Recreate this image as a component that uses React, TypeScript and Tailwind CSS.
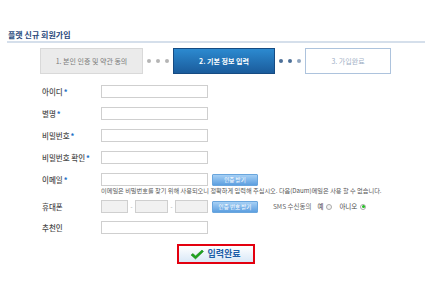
import React from "react";

const font = { fontFamily: '"Noto Sans CJK KR", "Noto Sans", sans-serif' };

function Star() {
  return <span className="text-[#1a6fc4] font-bold ml-[1px]">*</span>;
}

function Label({ children, star }: { children: React.ReactNode; star?: boolean }) {
  return (
    <div className="w-[59px] shrink-0 text-[7.5px] leading-[13px] text-[#4a4a4a] font-medium whitespace-nowrap">
      {children}
      {star && <Star />}
    </div>
  );
}

function Input({ w = 107, gray = false }: { w?: number; gray?: boolean }) {
  return (
    <div
      className={`h-[13px] shrink-0 border border-[#cfcfcf] ${gray ? "bg-[#f1f1f1]" : "bg-white"}`}
      style={{ width: w }}
    />
  );
}

function BlueBtn({ children }: { children: React.ReactNode }) {
  return (
    <div className="ml-[4px] w-[46px] h-[12px] rounded-[1px] border border-[#6aa6dd] bg-gradient-to-b from-[#a6d0f5] to-[#5c9fe0] text-white text-[5.5px] leading-[10px] text-center whitespace-nowrap">
      {children}
    </div>
  );
}

function Dots({ colors }: { colors: string[] }) {
  return (
    <div className="w-[30px] flex items-center justify-center gap-[5px]">
      {colors.map((c, i) => (
        <div key={i} className="w-[4px] h-[4px] rounded-full" style={{ background: c }} />
      ))}
    </div>
  );
}

export default function App() {
  return (
    <div className="w-[433px] h-[289px] bg-white pt-[30px] pl-[7px] pr-[8px]" style={font}>
      <div className="text-[8px] leading-[10px] font-bold text-[#2b4a7c] pl-[1px]">플랫 신규 회원가입</div>
      <div className="mt-[1px] h-[2px] bg-[#d5dfeb]" />

      <div className="mt-[5px] flex justify-center pr-[1px]">
        <div className="w-[103px] h-[26px] bg-[#ebebeb] border border-[#d9d9d9] text-[7px] text-[#7a7a7a] flex items-center justify-center whitespace-nowrap">
          1. 본인 인증 및 약관 동의
        </div>
        <Dots colors={["#b5b5b5", "#b5b5b5", "#b5b5b5"]} />
        <div className="w-[102px] h-[26px] bg-gradient-to-b from-[#2c8ad0] to-[#1b5c9c] border border-[#164b82] text-[7px] font-bold text-white flex items-center justify-center whitespace-nowrap">
          2. 기본 정보 입력
        </div>
        <Dots colors={["#4c6f98", "#4c6f98", "#8ea4bf"]} />
        <div className="w-[86px] h-[26px] bg-white border border-[#adc3dd] text-[7px] text-[#9fb0c6] flex items-center justify-center whitespace-nowrap">
          3. 가입완료
        </div>
      </div>

      <div className="mt-[11px] pl-[35px] flex flex-col">
        <div className="flex items-center">
          <Label star>아이디</Label>
          <Input />
        </div>
        <div className="mt-[9px] flex items-center">
          <Label star>별명</Label>
          <Input />
        </div>
        <div className="mt-[9px] flex items-center">
          <Label star>비밀번호</Label>
          <Input />
        </div>
        <div className="mt-[9px] flex items-center">
          <Label star>비밀번호 확인</Label>
          <Input />
        </div>
        <div className="mt-[9px] flex items-center">
          <Label star>이메일</Label>
          <Input />
          <BlueBtn>인증 받기</BlueBtn>
        </div>
        <div className="pl-[59px] mt-[1px] text-[6.2px] leading-[7px] text-[#555] whitespace-nowrap">
          이메일은 비밀번호를 찾기 위해 사용되오니 정확하게 입력해 주십시오. 다음(Daum)메일은 사용 할 수 없습니다.
        </div>
        <div className="mt-[6px] flex items-center">
          <Label>휴대폰</Label>
          <Input w={27} gray />
          <div className="w-[7px] text-center text-[6px] text-[#999] leading-[13px]">-</div>
          <Input w={33} gray />
          <div className="w-[7px] text-center text-[6px] text-[#999] leading-[13px]">-</div>
          <Input w={33} gray />
          <BlueBtn>인증 번호 받기</BlueBtn>
          <div className="ml-[15px] flex items-center text-[6.5px] text-[#666] whitespace-nowrap">
            <span>SMS 수신동의</span>
            <span className="ml-[6px] text-[#444]">예</span>
            <span className="ml-[3px] w-[6px] h-[6px] rounded-full border border-[#aaa] bg-[#f4f4f4]" />
            <span className="ml-[7px] text-[#444]">아니오</span>
            <span className="ml-[3px] w-[6px] h-[6px] rounded-full border border-[#aaa] bg-white flex items-center justify-center">
              <span className="w-[3px] h-[3px] rounded-full bg-[#22c022]" />
            </span>
          </div>
        </div>
        <div className="mt-[8px] flex items-center">
          <Label>추천인</Label>
          <Input />
        </div>
      </div>

      <div className="mt-[10px] flex justify-center pr-[1px]">
        <div className="w-[78px] h-[20px] border-2 border-[#e3000f] bg-gradient-to-b from-white to-[#d9e8f7] flex items-center justify-center gap-[3px]">
          <svg width="14" height="11" viewBox="0 0 14 11">
            <path d="M1 6 L3 4.5 L5.5 7 L12 1 L13.5 2.5 L5.5 10 Z" fill="#1fa51f" stroke="#137a13" strokeWidth="0.5" />
          </svg>
          <span className="text-[9px] font-bold text-[#1d5ea8] leading-[12px]">입력완료</span>
        </div>
      </div>
    </div>
  );
}
